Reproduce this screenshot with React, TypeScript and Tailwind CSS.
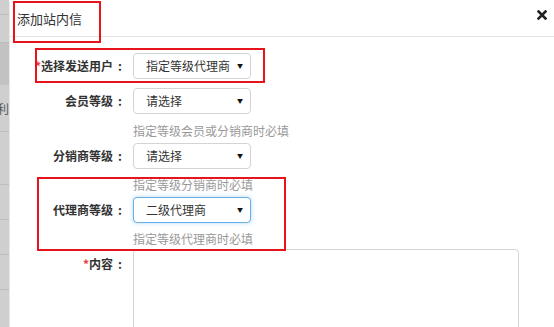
const font = "font-['Microsoft_YaHei','Noto_Sans_CJK_SC',sans-serif]"

function Select({ value, focused }: { value: string; focused?: boolean }) {
  return (
    <div
      className={
        "flex h-[26px] w-[118px] items-center justify-between rounded-[4px] border bg-white pl-[12px] pr-[7px] text-[12px] text-[#333] " +
        (focused ? "border-[#66afe9] shadow-[0_0_4px_rgba(102,175,233,0.5)]" : "border-[#d4d4d4]")
      }
    >
      <span className="leading-none">{value}</span>
      <span className="text-[6px] leading-none text-[#111]">▼</span>
    </div>
  )
}

function Label({ text, required }: { text: string; required?: boolean }) {
  return (
    <div className="flex w-[112px] shrink-0 items-center justify-end text-[12px] font-bold leading-none text-[#333]">
      {required && <span className="text-[#e4393c]">*</span>}
      <span>{text}</span>
      <span className="ml-[5px]">:</span>
    </div>
  )
}

function Help({ text, className }: { text: string; className: string }) {
  return <p className={"pl-[123px] text-[12px] leading-[17px] text-[#999] " + className}>{text}</p>
}

export default function App() {
  return (
    <div className={"relative flex h-[327px] w-[554px] overflow-hidden bg-white " + font}>
      {/* page behind the dialog */}
      <div className="flex w-[9px] shrink-0 flex-col bg-[#cfcfcf]">
        <div className="h-[15px] border-b border-[#bdbdbd]" />
        <div className="h-[28px] border-b border-[#bdbdbd]" />
        <div className="h-[42px] bg-[#c2c2c2]" />
        <div className="h-[47px] overflow-hidden border-b border-[#bdbdbd] pt-[18px] text-[12px] leading-none text-[#555]">
          <span className="-ml-[3px] block w-[12px]">利</span>
        </div>
        <div className="h-[53px] border-b border-[#bdbdbd]" />
        <div className="h-[35px] border-b border-[#bdbdbd]" />
        <div className="h-[35px] border-b border-[#bdbdbd]" />
        <div className="h-[35px] border-b border-[#bdbdbd]" />
      </div>

      {/* dialog */}
      <div className="flex-1 rounded-tl-[4px] border-l border-[#e8e8e8] bg-white">
        <div className="flex h-[37px] items-center justify-between border-b border-[#e5e5e5] pl-[7px] pr-[7px]">
          <h3 className="text-[13px] leading-none text-[#333]">添加站内信</h3>
          <svg width="10" height="10" viewBox="0 0 10 10" className="mb-[7px]">
            <path d="M1.5 1.5 L8.5 8.5 M8.5 1.5 L1.5 8.5" stroke="#222" strokeWidth="2.6" strokeLinecap="square" />
          </svg>
        </div>

        <div className="flex flex-col">
          <div className="mt-[16px] flex items-center gap-[11px]">
            <Label text="选择发送用户" required />
            <Select value="指定等级代理商" />
          </div>
          <div className="mt-[9px] flex items-center gap-[11px]">
            <Label text="会员等级" />
            <Select value="请选择" />
          </div>
          <Help text="指定等级会员或分销商时必填" className="mt-[8px]" />
          <div className="mt-[4px] flex items-center gap-[11px]">
            <Label text="分销商等级" />
            <Select value="请选择" />
          </div>
          <Help text="指定等级分销商时必填" className="mt-[7px]" />
          <div className="mt-[4px] flex items-center gap-[11px]">
            <Label text="代理商等级" />
            <Select value="二级代理商" focused />
          </div>
          <Help text="指定等级代理商时必填" className="mt-[7px]" />
          <div className="mt-[2px] flex items-start gap-[11px]">
            <div className="pt-[9px]">
              <Label text="内容" required />
            </div>
            <div className="h-[90px] w-[386px] rounded-[4px] border border-[#d4d4d4] bg-white" />
          </div>
        </div>
      </div>

      {/* red annotation boxes */}
      <div className="pointer-events-none absolute left-[13px] top-[1px] h-[42px] w-[88px] border-2 border-[#e8141b]" />
      <div className="pointer-events-none absolute left-[35px] top-[48px] h-[35px] w-[230px] border-2 border-[#e8141b]" />
      <div className="pointer-events-none absolute left-[37px] top-[177px] h-[74px] w-[249px] border-2 border-[#e8141b]" />
    </div>
  )
}
